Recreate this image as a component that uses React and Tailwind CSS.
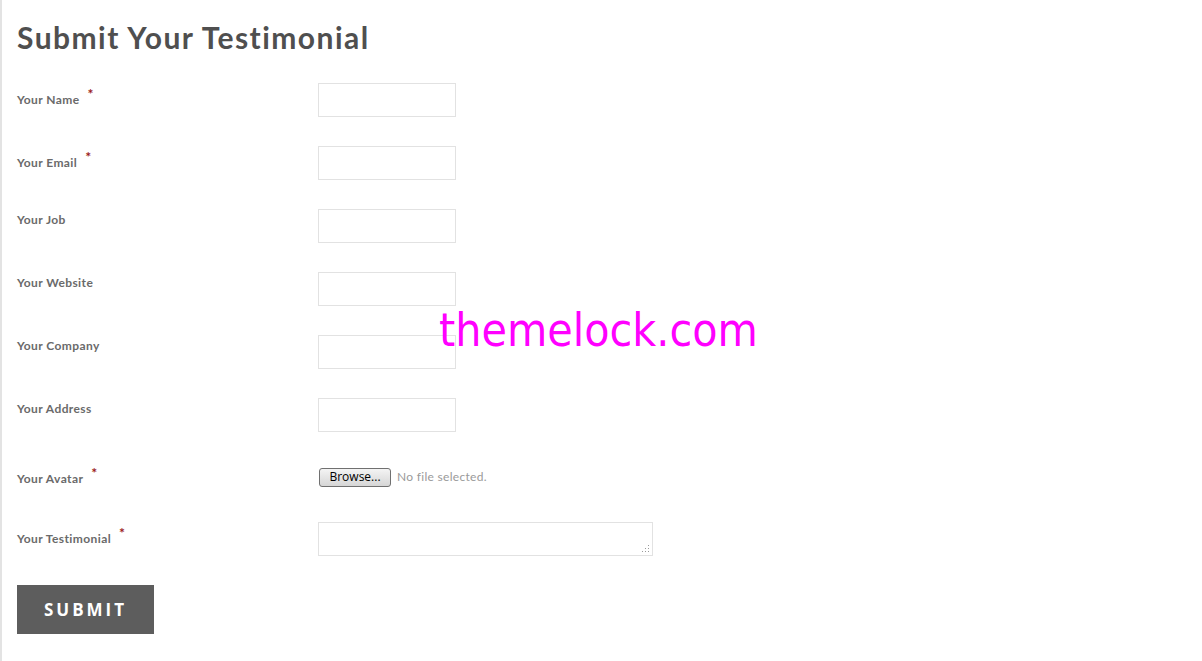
import React from "react";

const labelFont = { fontFamily: "Lato, 'Open Sans', sans-serif", letterSpacing: "0.4px" };

function Star() {
  return (
    <span className="ml-[8px] relative -top-[5px] text-[14px] leading-none text-[#9b1c1c]">*</span>
  );
}

function Row({ label, required, pt, children, items = "items-start" }) {
  return (
    <div className={`flex ${items}`}>
      <div
        className="w-[301px] shrink-0 text-[12px] leading-4 font-bold text-[#6a6a6a]"
        style={{ ...labelFont, paddingTop: pt }}
      >
        {label}
        {required && <Star />}
      </div>
      {children}
    </div>
  );
}

function TextInput() {
  return <input type="text" className="w-[138px] h-[34px] border border-[#e2e2e2] bg-white outline-none" />;
}

export default function App() {
  return (
    <div className="relative w-[1202px] h-[661px] bg-white overflow-hidden">
      <div className="h-full border-l-2 border-[#e3e3e3] pl-[15px] pt-[19px]">
        <h1
          className="text-[30px] leading-[36px] font-bold text-[#4f4f4f] mb-[28px]"
          style={{ fontFamily: "Lato, 'Open Sans', sans-serif", letterSpacing: "1.45px" }}
        >
          Submit Your Testimonial
        </h1>
        <div className="flex flex-col gap-[29px]">
          <Row label="Your Name" required pt={9}><TextInput /></Row>
          <Row label="Your Email" required pt={9}><TextInput /></Row>
          <Row label="Your Job" pt={3}><TextInput /></Row>
          <Row label="Your Website" pt={3}><TextInput /></Row>
          <Row label="Your Company" pt={3}><TextInput /></Row>
          <Row label="Your Address" pt={3}><TextInput /></Row>
          <div className="flex items-center h-[32px]">
            <div
              className="w-[301px] shrink-0 text-[12px] leading-4 font-bold text-[#6a6a6a] pt-[4px]"
              style={labelFont}
            >
              Your Avatar
              <Star />
            </div>
            <div className="flex items-center ml-[1px]">
              <button
                type="button"
                className="h-[19px] w-[72px] rounded-[3px] border border-[#707070] bg-gradient-to-b from-[#f4f4f4] to-[#d6d6d6] text-[12px] leading-[16px] text-black"
                style={{ fontFamily: "'Open Sans', 'Liberation Sans', sans-serif" }}
              >
                Browse...
              </button>
              <span
                className="ml-[6px] text-[12px] text-[#9a9a9a]"
                style={{ fontFamily: "Lato, 'Open Sans', sans-serif", letterSpacing: "0.3px" }}
              >
                No file selected.
              </span>
            </div>
          </div>
          <Row label="Your Testimonial" required pt={9}>
            <div className="relative w-[335px] h-[34px]">
              <textarea className="block w-full h-full resize-none border border-[#e2e2e2] bg-white outline-none" />
              <svg className="absolute right-[3px] bottom-[3px]" width="8" height="8" viewBox="0 0 8 8">
                <rect x="6" y="0" width="1" height="1" fill="#9a9a9a" />
                <rect x="3" y="3" width="1" height="1" fill="#9a9a9a" />
                <rect x="6" y="3" width="1" height="1" fill="#9a9a9a" />
                <rect x="0" y="6" width="1" height="1" fill="#9a9a9a" />
                <rect x="3" y="6" width="1" height="1" fill="#9a9a9a" />
                <rect x="6" y="6" width="1" height="1" fill="#9a9a9a" />
              </svg>
            </div>
          </Row>
          <div>
            <button
              type="button"
              className="w-[137px] h-[49px] bg-[#5d5d5d] text-white text-[17px] font-bold tracking-[3px]"
              style={{ fontFamily: "'Open Sans', sans-serif" }}
            >
              SUBMIT
            </button>
          </div>
        </div>
      </div>
      <div
        className="absolute left-[439px] top-[300px] text-[46px] leading-[60px] text-[#ff00ff]"
        style={{ fontFamily: "'DejaVu Sans Condensed', 'DejaVu Sans', sans-serif", fontStretch: "condensed" }}
      >
        themelock.com
      </div>
    </div>
  );
}
